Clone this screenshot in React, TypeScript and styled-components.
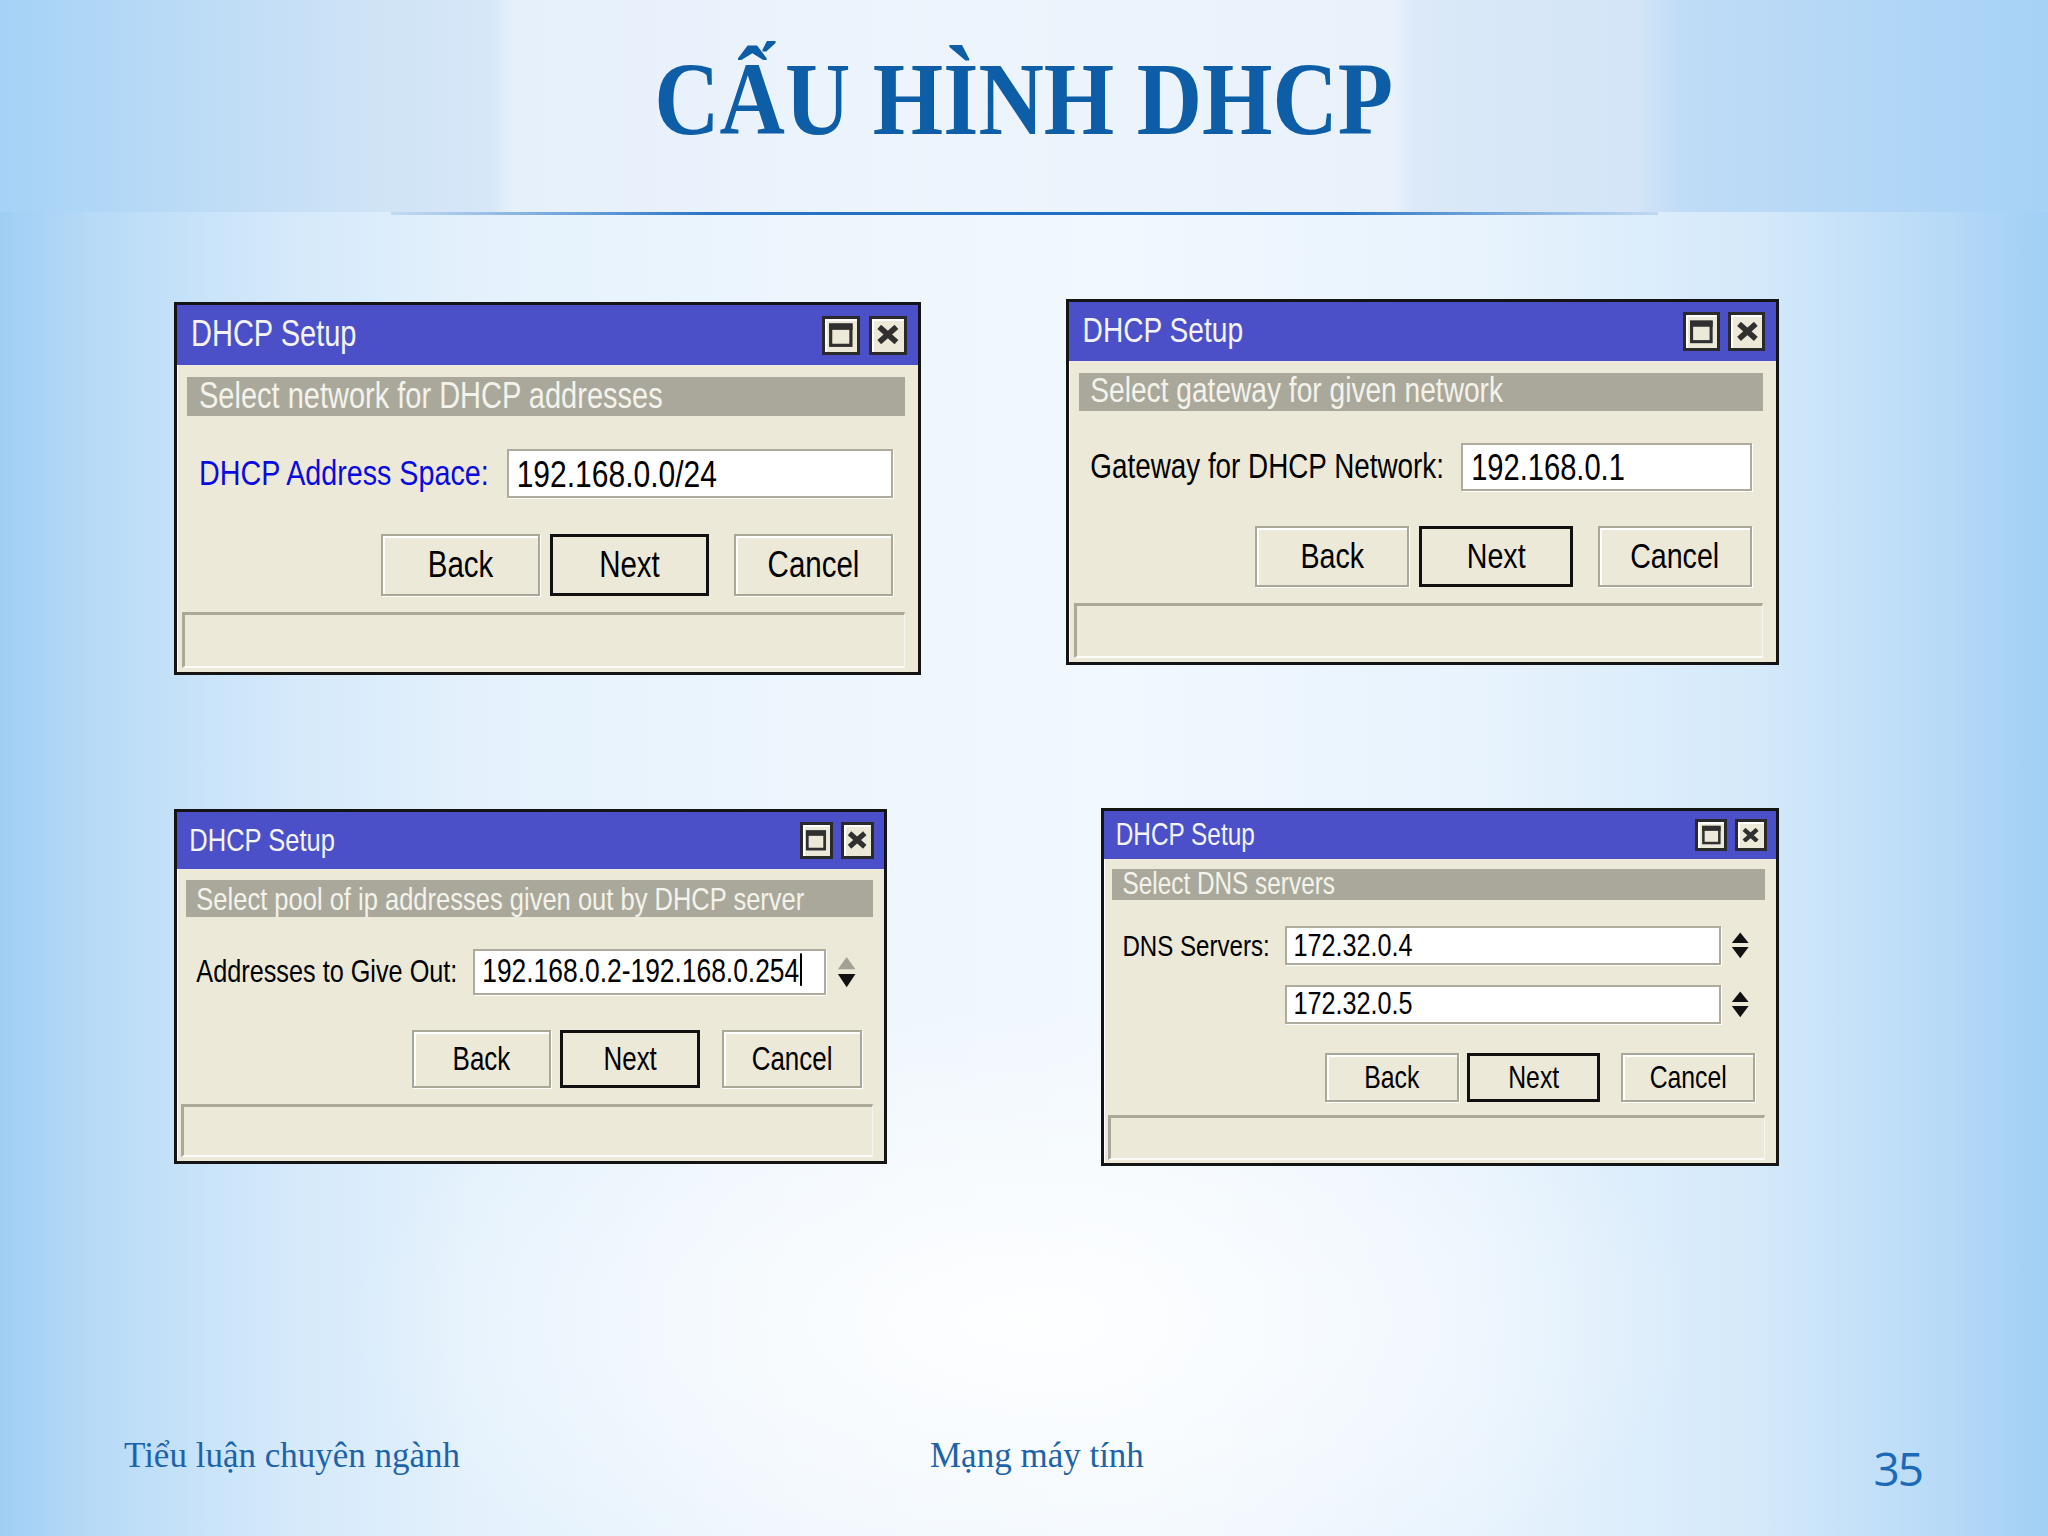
import { Fragment } from "react";
import styled, { createGlobalStyle } from "styled-components";

const GlobalStyle = createGlobalStyle`
  html, body { margin: 0; padding: 0; }
  body { width: 2048px; height: 1536px; overflow: hidden; }
`;

// the winbox font is a tall narrow sans: Arial widths, stretched up
const UI = `"Liberation Sans", Arial, sans-serif`;

const Slide = styled.div`
  width: 2048px;
  height: 1536px;
  overflow: hidden;
  display: flex;
  flex-direction: column;
  background:
    radial-gradient(ellipse 900px 420px at 50% 86%, rgba(255, 255, 255, 0.9), rgba(255, 255, 255, 0) 75%),
    linear-gradient(90deg, #9fcef4 0%, #b9dbf7 5%, #d2e8fa 13%, #e4f1fc 23%, #eef6fd 40%, #f1f8fe 55%, #e8f3fd 72%, #d4e9fa 86%, #b7daf7 95%, #a1cff5 100%);
`;

const Header = styled.header`
  height: 212px;
  box-sizing: border-box;
  padding-top: 47px;
  text-align: center;
  background: linear-gradient(90deg, #a5d2f6 0%, #bddcf6 10%, #cfe3f6 18%, #d6e7f8 24%, #e6f0fb 25%, #edf4fc 45%, #e9f2fb 68%, #dbe9f8 69%, #d3e5f7 80%, #c0dcf6 82%, #a6d2f6 100%);
`;

const Title = styled.h1`
  display: inline-block;
  margin: 0;
  font: bold 104px/1 "Liberation Serif", "Times New Roman", serif;
  color: #0d5ea6;
  transform: scaleX(0.87);
`;

const Rule = styled.div`
  width: 1267px;
  height: 3px;
  margin: 0 auto;
  background: linear-gradient(90deg, rgba(40, 110, 200, 0.15), #2a74c4 25%, #1f6fc6 50%, #2a74c4 75%, rgba(40, 110, 200, 0.15));
`;

const Board = styled.main`
  display: grid;
  grid-template-columns: 1fr 1fr;
  align-items: start;
  row-gap: 133px;
  padding: 84px 269px 0 174px;
  & > :nth-child(even) {
    justify-self: end;
  }
`;

const Win = styled.section<{ $w: number; $u: number; $v: number; $mt?: number }>`
  --u: ${(p) => p.$u}px;
  --v: ${(p) => p.$v}px;
  width: ${(p) => p.$w}px;
  margin-top: ${(p) => p.$mt ?? 0}px;
  box-sizing: border-box;
  border: 3px solid #141414;
  background: #ece9d8;
  box-shadow: inset 1px 1px 0 #ffffff;
  font-family: ${UI};
  line-height: 1.1;
  display: flex;
  flex-direction: column;
`;

const Txt = styled.span`
  display: inline-block;
  white-space: nowrap;
  transform: scaleY(1.25);
`;

const TitleBar = styled.div`
  height: calc(var(--v) * 60);
  background: #4b50c9;
  display: flex;
  align-items: center;
  padding: 0 calc(var(--u) * 11) 0 calc(var(--u) * 14);
  color: #f4f4f4;
  font-size: calc(var(--u) * 29);
`;

const TitleButtons = styled.div`
  margin-left: auto;
  display: flex;
  gap: calc(var(--u) * 9);
`;

const TitleButton = styled.div`
  width: calc(var(--u) * 38);
  height: calc(var(--v) * 39);
  box-sizing: border-box;
  background: #ece9d8;
  border: 3px solid #2a2a2a;
  box-shadow: inset 2px 2px 0 #ffffff;
  display: flex;
  align-items: center;
  justify-content: center;
  svg {
    display: block;
  }
`;

const Body = styled.div`
  display: flex;
  flex-direction: column;
  padding: 0 calc(var(--u) * 13) calc(var(--v) * 4) calc(var(--u) * 5);
`;

const Banner = styled.div`
  margin: calc(var(--v) * 12) 0 0 calc(var(--u) * 5);
  height: calc(var(--v) * 39);
  background: #aaa89b;
  color: #f3f3ec;
  display: flex;
  align-items: center;
  padding-left: calc(var(--u) * 12);
  font-size: calc(var(--u) * 29);
`;

const Fields = styled.div`
  margin-top: calc(var(--v) * 33);
  display: grid;
  grid-template-columns: auto 1fr;
  column-gap: calc(var(--u) * 18);
  row-gap: calc(var(--v) * 24);
  align-items: center;
  padding: 0 calc(var(--u) * 12) 0 calc(var(--u) * 17);
`;

const Label = styled.div<{ $color?: string }>`
  color: ${(p) => p.$color ?? "#000"};
  font-size: calc(var(--u) * 28.7);
`;

const FieldBox = styled.div<{ $col?: number }>`
  display: flex;
  align-items: center;
  grid-column: ${(p) => p.$col ?? "auto"};
`;

const Input = styled.div`
  flex: 1;
  min-width: 0;
  height: calc(var(--v) * 49);
  box-sizing: border-box;
  background: #ffffff;
  border: 2px solid #aeab9c;
  box-shadow: 1px 1px 0 #ffffff;
  display: flex;
  align-items: center;
  padding-left: calc(var(--u) * 8);
  font-size: calc(var(--u) * 30);
  color: #000;
`;

const Caret = styled.span`
  display: inline-block;
  width: 2px;
  height: 1em;
  background: #000;
  margin-left: 1px;
  vertical-align: -0.12em;
`;

const Spin = styled.div`
  width: calc(var(--u) * 22);
  height: calc(var(--v) * 36);
  margin: 0 calc(var(--u) * 7) 0 calc(var(--u) * 12);
  svg {
    display: block;
    width: 100%;
    height: 100%;
  }
`;

const ButtonRow = styled.div`
  margin-top: calc(var(--v) * 36);
  display: flex;
  justify-content: flex-end;
  padding-right: calc(var(--u) * 12);
`;

const Button = styled.div<{ $primary?: boolean; $ml?: number }>`
  width: calc(var(--u) * 159);
  height: calc(var(--v) * 62);
  margin-left: calc(var(--u) * ${(p) => p.$ml ?? 0});
  box-sizing: border-box;
  display: flex;
  align-items: center;
  justify-content: center;
  font-size: calc(var(--u) * 29.5);
  color: #000;
  border: ${(p) => (p.$primary ? "3px solid #111" : "2px solid #a9a798")};
  box-shadow: ${(p) => (p.$primary ? "none" : "inset 2px 2px 0 #ffffff, 1px 1px 0 #ffffff")};
`;

const Status = styled.div`
  margin-top: calc(var(--v) * 16);
  height: calc(var(--v) * 56);
  box-sizing: border-box;
  border-top: 3px solid #aca899;
  border-left: 3px solid #aca899;
  border-bottom: 2px solid #fbfbf8;
  border-right: 1px solid #f5f4ee;
`;

const Footer = styled.footer`
  margin-top: 269px;
  display: flex;
  align-items: flex-start;
  padding: 0 126px 0 124px;
  color: #1d63aa;
`;

const FootText = styled.div<{ $w?: number }>`
  width: ${(p) => (p.$w ? `${p.$w}px` : "auto")};
  font: 35px/1.2 "Liberation Serif", "Times New Roman", serif;
  white-space: nowrap;
`;

const PageNum = styled.div`
  margin-left: auto;
  margin-top: 6px;
  font: 46px/1.2 "Open Sans", "Noto Sans", sans-serif;
  letter-spacing: -2px;
  color: #1a6ab6;
`;

function MaxIcon() {
  return (
    <svg width="80%" height="80%" viewBox="0 0 24 24">
      <rect x="2.5" y="2.5" width="19" height="19" fill="none" stroke="#303030" strokeWidth="3" />
      <rect x="1" y="1" width="22" height="6" fill="#303030" />
    </svg>
  );
}

function CloseIcon() {
  return (
    <svg width="74%" height="58%" viewBox="0 0 24 20">
      <path d="M3 2 L21 18 M21 2 L3 18" stroke="#303030" strokeWidth="6" />
    </svg>
  );
}

function SpinIcon({ upColor }: { upColor: string }) {
  return (
    <svg viewBox="0 0 22 36" preserveAspectRatio="none">
      <polygon points="11,2 21,15 1,15" fill={upColor} />
      <polygon points="1,20 21,20 11,34" fill="#111" />
    </svg>
  );
}

type Field = { label?: string; value: string; caret?: boolean; spin?: string };

type WindowProps = {
  w: number;
  u: number;
  v: number;
  mt?: number;
  banner: string;
  labelColor?: string;
  fields: Field[];
};

function SetupWindow({ w, u, v, mt, banner, labelColor, fields }: WindowProps) {
  return (
    <Win $w={w} $u={u} $v={v} $mt={mt}>
      <TitleBar>
        <Txt>DHCP Setup</Txt>
        <TitleButtons>
          <TitleButton>
            <MaxIcon />
          </TitleButton>
          <TitleButton>
            <CloseIcon />
          </TitleButton>
        </TitleButtons>
      </TitleBar>
      <Body>
        <Banner>
          <Txt>{banner}</Txt>
        </Banner>
        <Fields>
          {fields.map((f, i) => (
            <Fragment key={i}>
              {f.label ? (
                <Label $color={labelColor}>
                  <Txt>{f.label}</Txt>
                </Label>
              ) : null}
              <FieldBox $col={f.label ? undefined : 2}>
                <Input>
                  <Txt>
                    {f.value}
                    {f.caret ? <Caret /> : null}
                  </Txt>
                </Input>
                {f.spin ? (
                  <Spin>
                    <SpinIcon upColor={f.spin} />
                  </Spin>
                ) : null}
              </FieldBox>
            </Fragment>
          ))}
        </Fields>
        <ButtonRow>
          <Button>
            <Txt>Back</Txt>
          </Button>
          <Button $primary $ml={10}>
            <Txt>Next</Txt>
          </Button>
          <Button $ml={25}>
            <Txt>Cancel</Txt>
          </Button>
        </ButtonRow>
        <Status />
      </Body>
    </Win>
  );
}

export default function App() {
  return (
    <>
      <GlobalStyle />
      <Slide>
        <Header>
          <Title>CẤU HÌNH DHCP</Title>
        </Header>
        <Rule />
        <Board>
          <SetupWindow
            w={747}
            u={1}
            v={1}
            mt={3}
            banner="Select network for DHCP addresses"
            labelColor="#0a0ae0"
            fields={[{ label: "DHCP Address Space:", value: "192.168.0.0/24" }]}
          />
          <SetupWindow
            w={713}
            u={0.97}
            v={0.98}
            banner="Select gateway for given network"
            fields={[{ label: "Gateway for DHCP Network:", value: "192.168.0.1" }]}
          />
          <SetupWindow
            w={713}
            u={0.88}
            v={0.95}
            mt={1}
            banner="Select pool of ip addresses given out by DHCP server"
            fields={[
              { label: "Addresses to Give Out:", value: "192.168.0.2-192.168.0.254", caret: true, spin: "#a3a193" },
            ]}
          />
          <SetupWindow
            w={678}
            u={0.84}
            v={0.8}
            banner="Select DNS servers"
            fields={[
              { label: "DNS Servers:", value: "172.32.0.4", spin: "#111" },
              { value: "172.32.0.5", spin: "#111" },
            ]}
          />
        </Board>
        <Footer>
          <FootText $w={806}>Tiểu luận chuyên ngành</FootText>
          <FootText>Mạng máy tính</FootText>
          <PageNum>35</PageNum>
        </Footer>
      </Slide>
    </>
  );
}
